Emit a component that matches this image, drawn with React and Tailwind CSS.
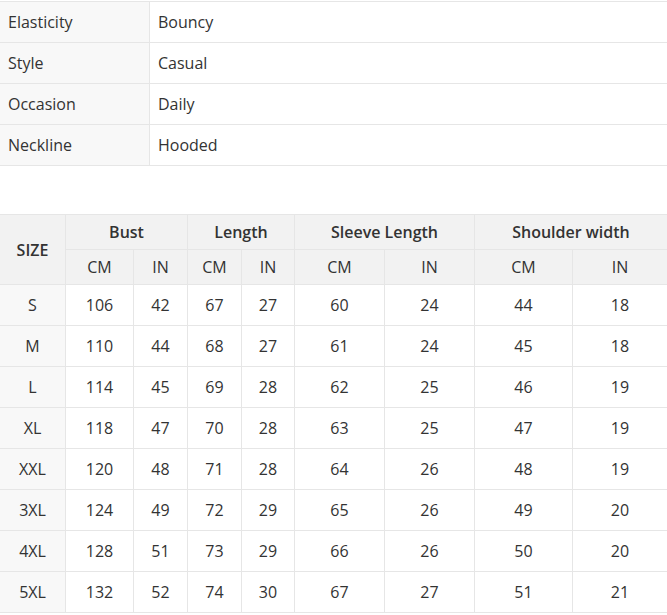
import React from "react";

const attrs = [
  ["Elasticity", "Bouncy"],
  ["Style", "Casual"],
  ["Occasion", "Daily"],
  ["Neckline", "Hooded"],
];

const rows = [
  ["S", 106, 42, 67, 27, 60, 24, 44, 18],
  ["M", 110, 44, 68, 27, 61, 24, 45, 18],
  ["L", 114, 45, 69, 28, 62, 25, 46, 19],
  ["XL", 118, 47, 70, 28, 63, 25, 47, 19],
  ["XXL", 120, 48, 71, 28, 64, 26, 48, 19],
  ["3XL", 124, 49, 72, 29, 65, 26, 49, 20],
  ["4XL", 128, 51, 73, 29, 66, 26, 50, 20],
  ["5XL", 132, 52, 74, 30, 67, 27, 51, 21],
];

export default function App() {
  const hdr = "bg-[#f2f2f2] flex items-center justify-center font-semibold";
  const sub = "bg-[#f2f2f2] flex items-center justify-center h-[34px]";
  return (
    <div
      className="w-[667px] bg-white text-[16px] text-[#333333]"
      style={{ fontFamily: '"Open Sans", "Liberation Sans", sans-serif' }}
    >
      <div className="mt-px grid grid-cols-[149px_1fr] gap-px bg-[#e6e6e6] border-y border-[#e6e6e6]">
        {attrs.map(([k, v]) => (
          <React.Fragment key={k}>
            <div className="bg-[#f8f8f8] h-10 flex items-center pl-2">{k}</div>
            <div className="bg-white h-10 flex items-center pl-2">{v}</div>
          </React.Fragment>
        ))}
      </div>

      <div className="mt-12 grid grid-cols-[65px_67px_53px_53px_52px_89px_89px_97px_94px] gap-px bg-[#e6e6e6] border-y border-[#e6e6e6]">
        <div className={`${hdr} row-span-2`}>SIZE</div>
        <div className={`${hdr} col-span-2 h-[34px]`}>Bust</div>
        <div className={`${hdr} col-span-2 h-[34px]`}>Length</div>
        <div className={`${hdr} col-span-2 h-[34px]`}>Sleeve Length</div>
        <div className={`${hdr} col-span-2 h-[34px]`}>Shoulder width</div>
        {["CM", "IN", "CM", "IN", "CM", "IN", "CM", "IN"].map((t, i) => (
          <div key={i} className={sub}>
            {t}
          </div>
        ))}
        {rows.map((r) => (
          <React.Fragment key={r[0]}>
            {r.map((c, i) => (
              <div
                key={i}
                className={`${i === 0 ? "bg-[#f8f8f8]" : "bg-white"} h-10 flex items-center justify-center`}
              >
                {c}
              </div>
            ))}
          </React.Fragment>
        ))}
      </div>
    </div>
  );
}
